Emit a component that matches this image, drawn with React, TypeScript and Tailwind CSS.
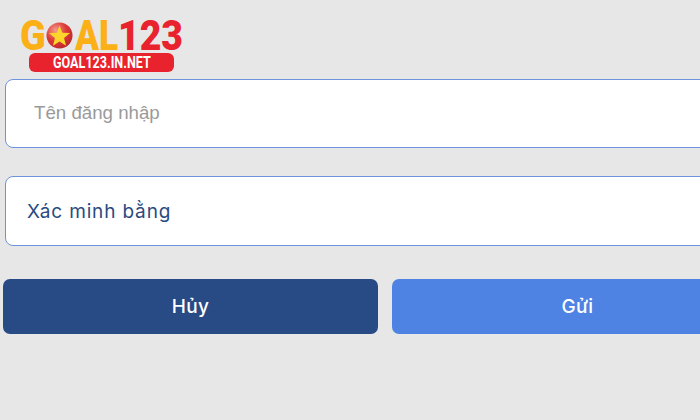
export default function App() {
  return (
    <div className="w-[700px] h-[420px] overflow-hidden bg-[#e7e7e7] font-['Inter',sans-serif]">
      <div className="w-[186px] ml-[20px] pt-[20px] h-[79px] flex flex-col">
        <div className="flex items-center h-[31px] leading-[31px] font-['Roboto',sans-serif] font-black text-[42px] whitespace-nowrap">
          <span className="text-[#fbb017] w-[26px] origin-left scale-x-[0.9]">G</span>
          <svg viewBox="0 0 28 28" className="w-[27px] h-[27px] shrink-0">
            <defs>
              <radialGradient id="ball" cx="0.35" cy="0.3" r="0.8">
                <stop offset="0" stopColor="#f59a8c" />
                <stop offset="0.5" stopColor="#dc3a35" />
                <stop offset="1" stopColor="#b9242a" />
              </radialGradient>
            </defs>
            <circle cx="14" cy="14" r="13.5" fill="url(#ball)" />
            <path d="M14 3.5l2.9 7.6 8.1.4-6.3 5.1 2.1 7.9L14 20.1l-6.8 4.4 2.1-7.9-6.3-5.1 8.1-.4z" fill="#fbd52b" />
          </svg>
          <span className="text-[#fbb017] w-[43px] ml-[2px] origin-left scale-x-[0.84]">AL</span>
          <span className="text-[#e8232e] w-[65px] origin-left scale-x-[0.89]">123</span>
        </div>
        <div className="mt-[2px] ml-[9px] w-[145px] h-[19px] rounded-[6px] bg-[#e8232e] text-white font-['Roboto',sans-serif] font-bold text-[17px] leading-[19px] flex justify-center">
          <span className="w-[98px] whitespace-nowrap origin-left scale-x-[0.74]">GOAL123.IN.NET</span>
        </div>
      </div>

      <div className="ml-[5px] w-[760px] h-[69px] bg-white border-[1.5px] border-[#6e93dc] rounded-[8px] flex items-center pl-[28px] text-[18.7px] text-[#9a9a9a] font-['Liberation_Sans',sans-serif]">
        Tên đăng nhập
      </div>
      <div className="mt-[28px] ml-[5px] w-[760px] h-[70px] bg-white border-[1.5px] border-[#6e93dc] rounded-[8px] flex items-center pl-[21px] pt-[2px] text-[19px] tracking-[0.85px] text-[#2a4a80]">
        Xác minh bằng
      </div>

      <div className="mt-[33px] ml-[3px] flex gap-[14px] w-[770px]">
        <button className="w-[375px] h-[55px] rounded-[7px] bg-[#284a85] text-white text-[19px] font-medium tracking-[0.3px] pt-[1px]">Hủy</button>
        <button className="w-[375px] h-[55px] rounded-[7px] bg-[#4f83e3] text-white text-[19px] font-medium tracking-[0.3px] pr-[4px] pt-[1px]">Gửi</button>
      </div>
    </div>
  );
}
